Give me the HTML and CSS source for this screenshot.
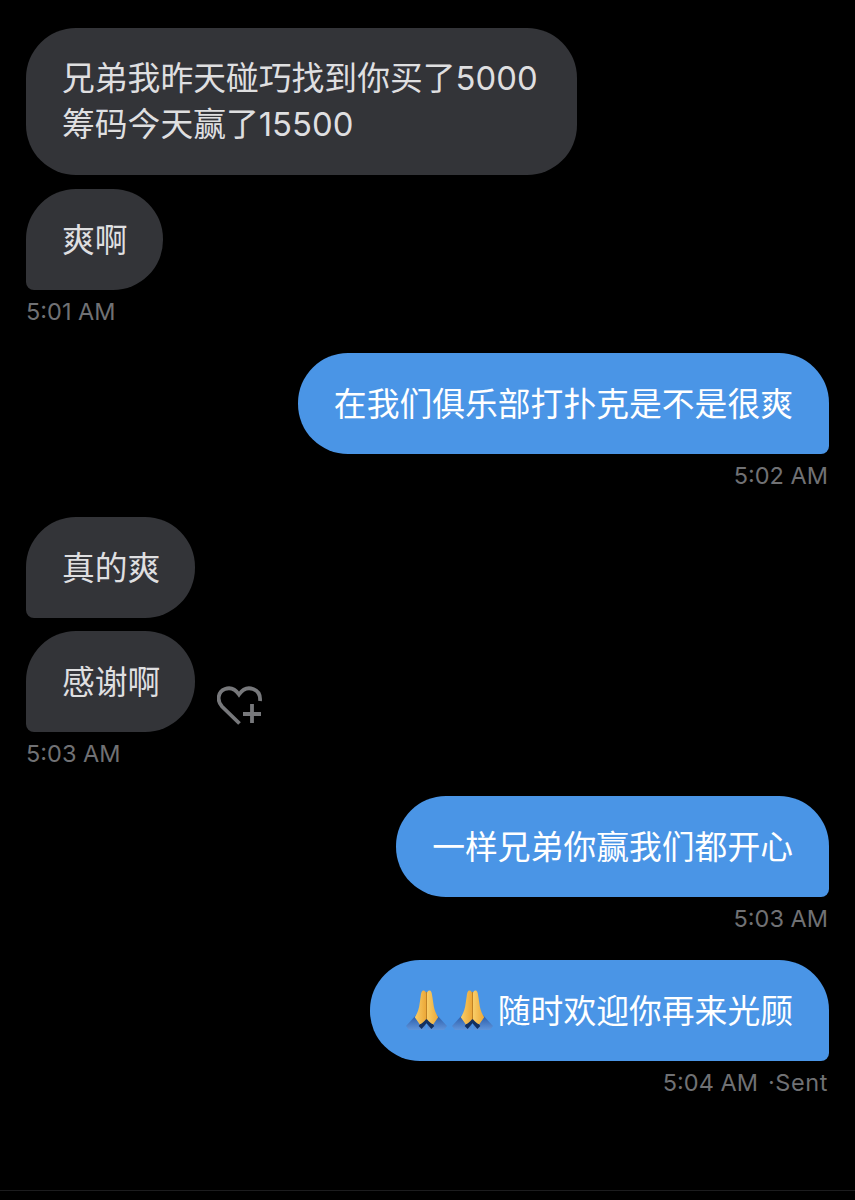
FILE: index.html
```html
<!DOCTYPE html>
<html lang="zh-CN">
<head>
    <meta charset="UTF-8">
    <title>Messages</title>
    <link rel="stylesheet" href="styles.css">
</head>
<body>
    <main class="thread">
        <section class="group">
            <div class="bubble in wide">兄弟我昨天碰巧找到你买了5000筹码今天赢了15500</div>
            <div class="bubble in">爽啊</div>
            <div class="time">5:01 AM</div>
        </section>

        <section class="group mine">
            <div class="bubble out">在我们俱乐部打扑克是不是很爽</div>
            <div class="time">5:02 AM</div>
        </section>

        <section class="group">
            <div class="bubble in">真的爽</div>
            <div class="liked">
                <div class="bubble in">感谢啊</div>
                <svg class="heart" width="45" height="40" viewBox="0 0 45 40" fill="none" stroke="#77787b" stroke-width="3.8">
                    <path d="M22.5 37.5 L5 20.5 C-0.5 14.5 1 5.5 8 3 C13.5 1 18.5 3.5 22 8.5 C25.5 3.5 30.5 1 36 3 C41 4.8 43.5 9.5 43 15"/>
                    <path d="M35 18 V37 M26 28 H44"/>
                </svg>
            </div>
            <div class="time">5:03 AM</div>
        </section>

        <section class="group mine after-liked">
            <div class="bubble out">一样兄弟你赢我们都开心</div>
            <div class="time">5:03 AM</div>
        </section>

        <section class="group mine">
            <div class="bubble out with-emoji">
                <svg class="pray" viewBox="0 0 42 42"><use href="#hands"/></svg>
                <svg class="pray" viewBox="0 0 42 42"><use href="#hands"/></svg>
                <span>随时欢迎你再来光顾</span>
            </div>
            <div class="time">5:04 AM<span class="sent">·Sent</span></div>
        </section>
    </main>
    <footer class="bar"></footer>

    <!-- praying hands emoji -->
    <svg width="0" height="0" class="defs">
        <defs>
            <linearGradient id="sleeve" x1="0" y1="0" x2="0" y2="1">
                <stop offset="0" stop-color="#2a5aa6"/>
                <stop offset="1" stop-color="#5f95dc"/>
            </linearGradient>
            <linearGradient id="skin" x1="0" y1="0" x2="1" y2="0">
                <stop offset="0" stop-color="#f9ce68"/>
                <stop offset="1" stop-color="#eca838"/>
            </linearGradient>
            <g id="hands">
                <path d="M0 37 L10 26 L20 32 L20 41 L3 41 Z" fill="url(#sleeve)"/>
                <path d="M42 37 L32 26 L22 32 L22 41 L39 41 Z" fill="url(#sleeve)"/>
                <path d="M21 27 L13 37 L16 40 L21 34 L26 40 L29 37 Z" fill="#14305f"/>
                <path d="M18 0.5 C16 0.5 15.5 3 15 7 L13.5 17 C12.5 22 11 25 9 28 L14 35 C16 35 18.5 32.5 20.5 30 L20.5 4 C20.5 2 19.5 0.5 18 0.5 Z" fill="url(#skin)"/>
                <path d="M24 0.5 C26 0.5 26.5 3 27 7 L28.5 17 C29.5 22 31 25 33 28 L28 35 C26 35 23.5 32.5 21.5 30 L21.5 4 C21.5 2 22.5 0.5 24 0.5 Z" fill="url(#skin)"/>
                <path d="M21 2 V30" stroke="#c4821f" stroke-width="1"/>
            </g>
        </defs>
    </svg>
</body>
</html>
```

FILE: styles.css
```css
body {
    margin: 0;
    background: #000;
    font-family: Inter, "Noto Sans CJK SC", sans-serif;
}

.thread {
    box-sizing: border-box;
    height: 1190px;
    padding: 28px 26px 0;
    display: flex;
    flex-direction: column;
    gap: 26px;
}

.group {
    display: flex;
    flex-direction: column;
    align-items: flex-start;
    gap: 14px;
}

.group.mine {
    align-items: flex-end;
}

.group.after-liked {
    margin-top: 1px;
}

.bubble {
    box-sizing: border-box;
    padding: 27.5px 36px;
    font-size: 32.8px;
    line-height: 46px;
}

.bubble.in {
    background: #333438;
    color: #dfdfe0;
    border-radius: 50px 50px 50px 8px;
    padding-right: 35px;
}

.bubble.wide {
    width: 551px;
    padding: 28px 36px;
    line-height: 45.5px;
    border-radius: 50px;
}

.bubble.out {
    background: #4a95e6;
    color: #fff;
    border-radius: 50px 50px 8px 50px;
}

.with-emoji {
    display: flex;
    align-items: center;
    gap: 5px;
}

.pray {
    width: 41px;
    height: 41px;
}

.liked {
    margin-top: -1px;
    display: flex;
    align-items: flex-end;
    gap: 22px;
}

.heart {
    margin-bottom: 6px;
}

.time {
    margin-top: -7px;
    padding-right: 1px;
    font-size: 23.5px;
    line-height: 30px;
    color: #707174;
}

.sent {
    margin-left: 10px;
    letter-spacing: 0.6px;
}

.bar {
    border-top: 1px solid #1c1c1e;
}

.defs {
    position: absolute;
}
```
